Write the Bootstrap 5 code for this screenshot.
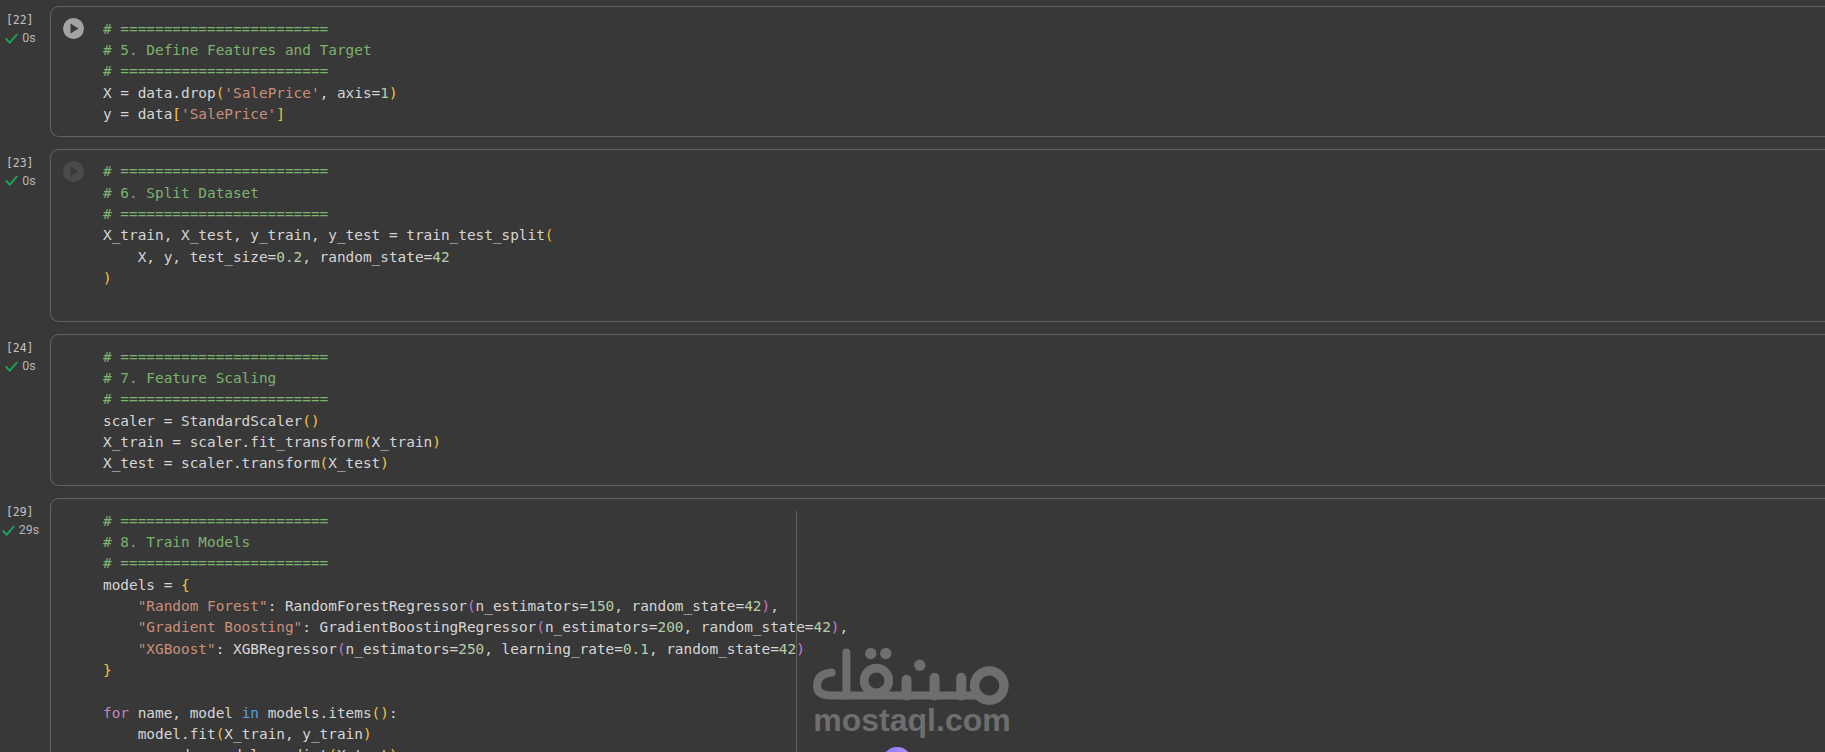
<!doctype html>
<html lang="en">
<head>
<meta charset="utf-8">
<title>Notebook</title>
<link href="https://cdn.jsdelivr.net/npm/bootstrap@5.3.0/dist/css/bootstrap.min.css" rel="stylesheet">
<style>
html,body{height:752px;overflow:hidden;background:#383838}
.sheet{padding-top:6px;gap:12px;height:752px;overflow:hidden;position:relative}
.gutter{width:50px;flex:none;position:relative;height:40px}
.cellno{font:11.5px/14px "DejaVu Sans Mono","Liberation Mono",monospace;color:#c4c4c4;padding:7px 0 0 6px;letter-spacing:-.1px}
.stat{justify-content:center;padding:4px 9px 0 0;gap:4px;font:12.5px/14px Roboto,"Liberation Sans",sans-serif;color:#b4b4b4}
.codebox{flex:1 1 auto;min-width:0;border:1px solid #626262;border-right:0;border-radius:9px 0 0 9px;padding:11.5px 0 10.5px 52px;position:relative}
.runbtn{position:absolute;left:12px;top:11px;width:21px;height:21px}
.src{font:14.4px/21.35px "DejaVu Sans Mono","Liberation Mono",monospace;color:#d6d6d6}
.ln{white-space:pre;height:21.35px}
.cm{color:#7cb36e}.st{color:#c98f78}.nu{color:#b5cea8}.ye{color:#f2c53d}.pu{color:#c678c8}.kw{color:#c586c0}.bl{color:#5a9fd6}
.divider{position:absolute;left:745px;top:12px;height:400px;width:1px;background:#626262}
.wmark{position:absolute;left:813px;top:647px;width:198px;color:#6e6e6e}
.wmark svg{display:block;width:197px;height:59px}
.wmarkword{font:700 32px/34px "Liberation Sans",sans-serif;white-space:nowrap;text-align:center;margin-top:-3px}
.avatar{position:absolute;left:882px;top:747px;width:30px;height:30px;border-radius:50%;background:linear-gradient(100deg,#7d7dff,#c88cff)}
</style>
</head>
<body>
<main class="sheet d-flex flex-column">

<section class="d-flex flex-shrink-0">
  <div class="gutter"><div class="cellno">[22]</div>
    <div class="stat d-flex align-items-center"><svg width="13" height="11" viewBox="0 0 13 11"><path d="M.8 5.5l4 4.2L12.2 1" fill="none" stroke="#1fa35a" stroke-width="1.9"/></svg>0s</div></div>
  <div class="codebox">
    <svg class="runbtn" viewBox="0 0 21 21"><circle cx="10.5" cy="10.5" r="10.5" fill="#a3a3a3"/><path d="M7.5 5.5v10l8-5z" fill="#3a3a3a"/></svg>
    <div class="src">
      <div class="ln cm"># ========================</div>
      <div class="ln cm"># 5. Define Features and Target</div>
      <div class="ln cm"># ========================</div>
      <div class="ln">X = data.drop<span class="ye">(</span><span class="st">'SalePrice'</span>, axis=<span class="nu">1</span><span class="ye">)</span></div>
      <div class="ln">y = data<span class="ye">[</span><span class="st">'SalePrice'</span><span class="ye">]</span></div>
    </div>
  </div>
</section>

<section class="d-flex flex-shrink-0">
  <div class="gutter"><div class="cellno">[23]</div>
    <div class="stat d-flex align-items-center"><svg width="13" height="11" viewBox="0 0 13 11"><path d="M.8 5.5l4 4.2L12.2 1" fill="none" stroke="#1fa35a" stroke-width="1.9"/></svg>0s</div></div>
  <div class="codebox">
    <svg class="runbtn" viewBox="0 0 21 21"><circle cx="10.5" cy="10.5" r="10.5" fill="#4b4b4b"/><path d="M7.5 5.5v10l8-5z" fill="#383838"/></svg>
    <div class="src">
      <div class="ln cm"># ========================</div>
      <div class="ln cm"># 6. Split Dataset</div>
      <div class="ln cm"># ========================</div>
      <div class="ln">X_train, X_test, y_train, y_test = train_test_split<span class="ye">(</span></div>
      <div class="ln">    X, y, test_size=<span class="nu">0.2</span>, random_state=<span class="nu">42</span></div>
      <div class="ln"><span class="ye">)</span></div>
      <div class="ln"></div>
    </div>
  </div>
</section>

<section class="d-flex flex-shrink-0">
  <div class="gutter"><div class="cellno">[24]</div>
    <div class="stat d-flex align-items-center"><svg width="13" height="11" viewBox="0 0 13 11"><path d="M.8 5.5l4 4.2L12.2 1" fill="none" stroke="#1fa35a" stroke-width="1.9"/></svg>0s</div></div>
  <div class="codebox">
    <div class="src">
      <div class="ln cm"># ========================</div>
      <div class="ln cm"># 7. Feature Scaling</div>
      <div class="ln cm"># ========================</div>
      <div class="ln">scaler = StandardScaler<span class="ye">()</span></div>
      <div class="ln">X_train = scaler.fit_transform<span class="ye">(</span>X_train<span class="ye">)</span></div>
      <div class="ln">X_test = scaler.transform<span class="ye">(</span>X_test<span class="ye">)</span></div>
    </div>
  </div>
</section>

<section class="d-flex flex-shrink-0">
  <div class="gutter"><div class="cellno">[29]</div>
    <div class="stat d-flex align-items-center"><svg width="13" height="11" viewBox="0 0 13 11"><path d="M.8 5.5l4 4.2L12.2 1" fill="none" stroke="#1fa35a" stroke-width="1.9"/></svg>29s</div></div>
  <div class="codebox">
    <div class="src">
      <div class="ln cm"># ========================</div>
      <div class="ln cm"># 8. Train Models</div>
      <div class="ln cm"># ========================</div>
      <div class="ln">models = <span class="ye">{</span></div>
      <div class="ln">    <span class="st">"Random Forest"</span>: RandomForestRegressor<span class="pu">(</span>n_estimators=<span class="nu">150</span>, random_state=<span class="nu">42</span><span class="pu">)</span>,</div>
      <div class="ln">    <span class="st">"Gradient Boosting"</span>: GradientBoostingRegressor<span class="pu">(</span>n_estimators=<span class="nu">200</span>, random_state=<span class="nu">42</span><span class="pu">)</span>,</div>
      <div class="ln">    <span class="st">"XGBoost"</span>: XGBRegressor<span class="pu">(</span>n_estimators=<span class="nu">250</span>, learning_rate=<span class="nu">0.1</span>, random_state=<span class="nu">42</span><span class="pu">)</span></div>
      <div class="ln"><span class="ye">}</span></div>
      <div class="ln"></div>
      <div class="ln"><span class="kw">for</span> name, model <span class="bl">in</span> models.items<span class="ye">()</span>:</div>
      <div class="ln">    model.fit<span class="ye">(</span>X_train, y_train<span class="ye">)</span></div>
      <div class="ln">    y_pred = model.predict<span class="ye">(</span>X_test<span class="ye">)</span></div>
    </div>
    <div class="divider"></div>
  </div>
</section>

<div class="wmark">
  <svg viewBox="72 50 590 176" role="img" aria-label="mostaql logo" fill="none" stroke="#6e6e6e" stroke-width="24" stroke-linecap="round">
    <path d="M172 66V195"/>
    <path d="M128 126Q84 130 84 166Q84 195 125 195H560"/>
    <circle cx="262" cy="150" r="37" stroke-width="26"/>
    <circle cx="600" cy="165" r="44" stroke-width="28"/>
    <path d="M352 148V195M436 142V195M516 142V195" stroke-width="30"/>
    <g fill="#6e6e6e" stroke="none"><circle cx="245" cy="69" r="17"/><circle cx="290" cy="69" r="17"/><circle cx="392" cy="104" r="17"/></g>
  </svg>
  <div class="wmarkword">mostaql.com</div>
</div>
<div class="avatar"></div>

</main>
<script src="https://cdn.jsdelivr.net/npm/bootstrap@5.3.0/dist/js/bootstrap.bundle.min.js"></script>
</body>
</html>
